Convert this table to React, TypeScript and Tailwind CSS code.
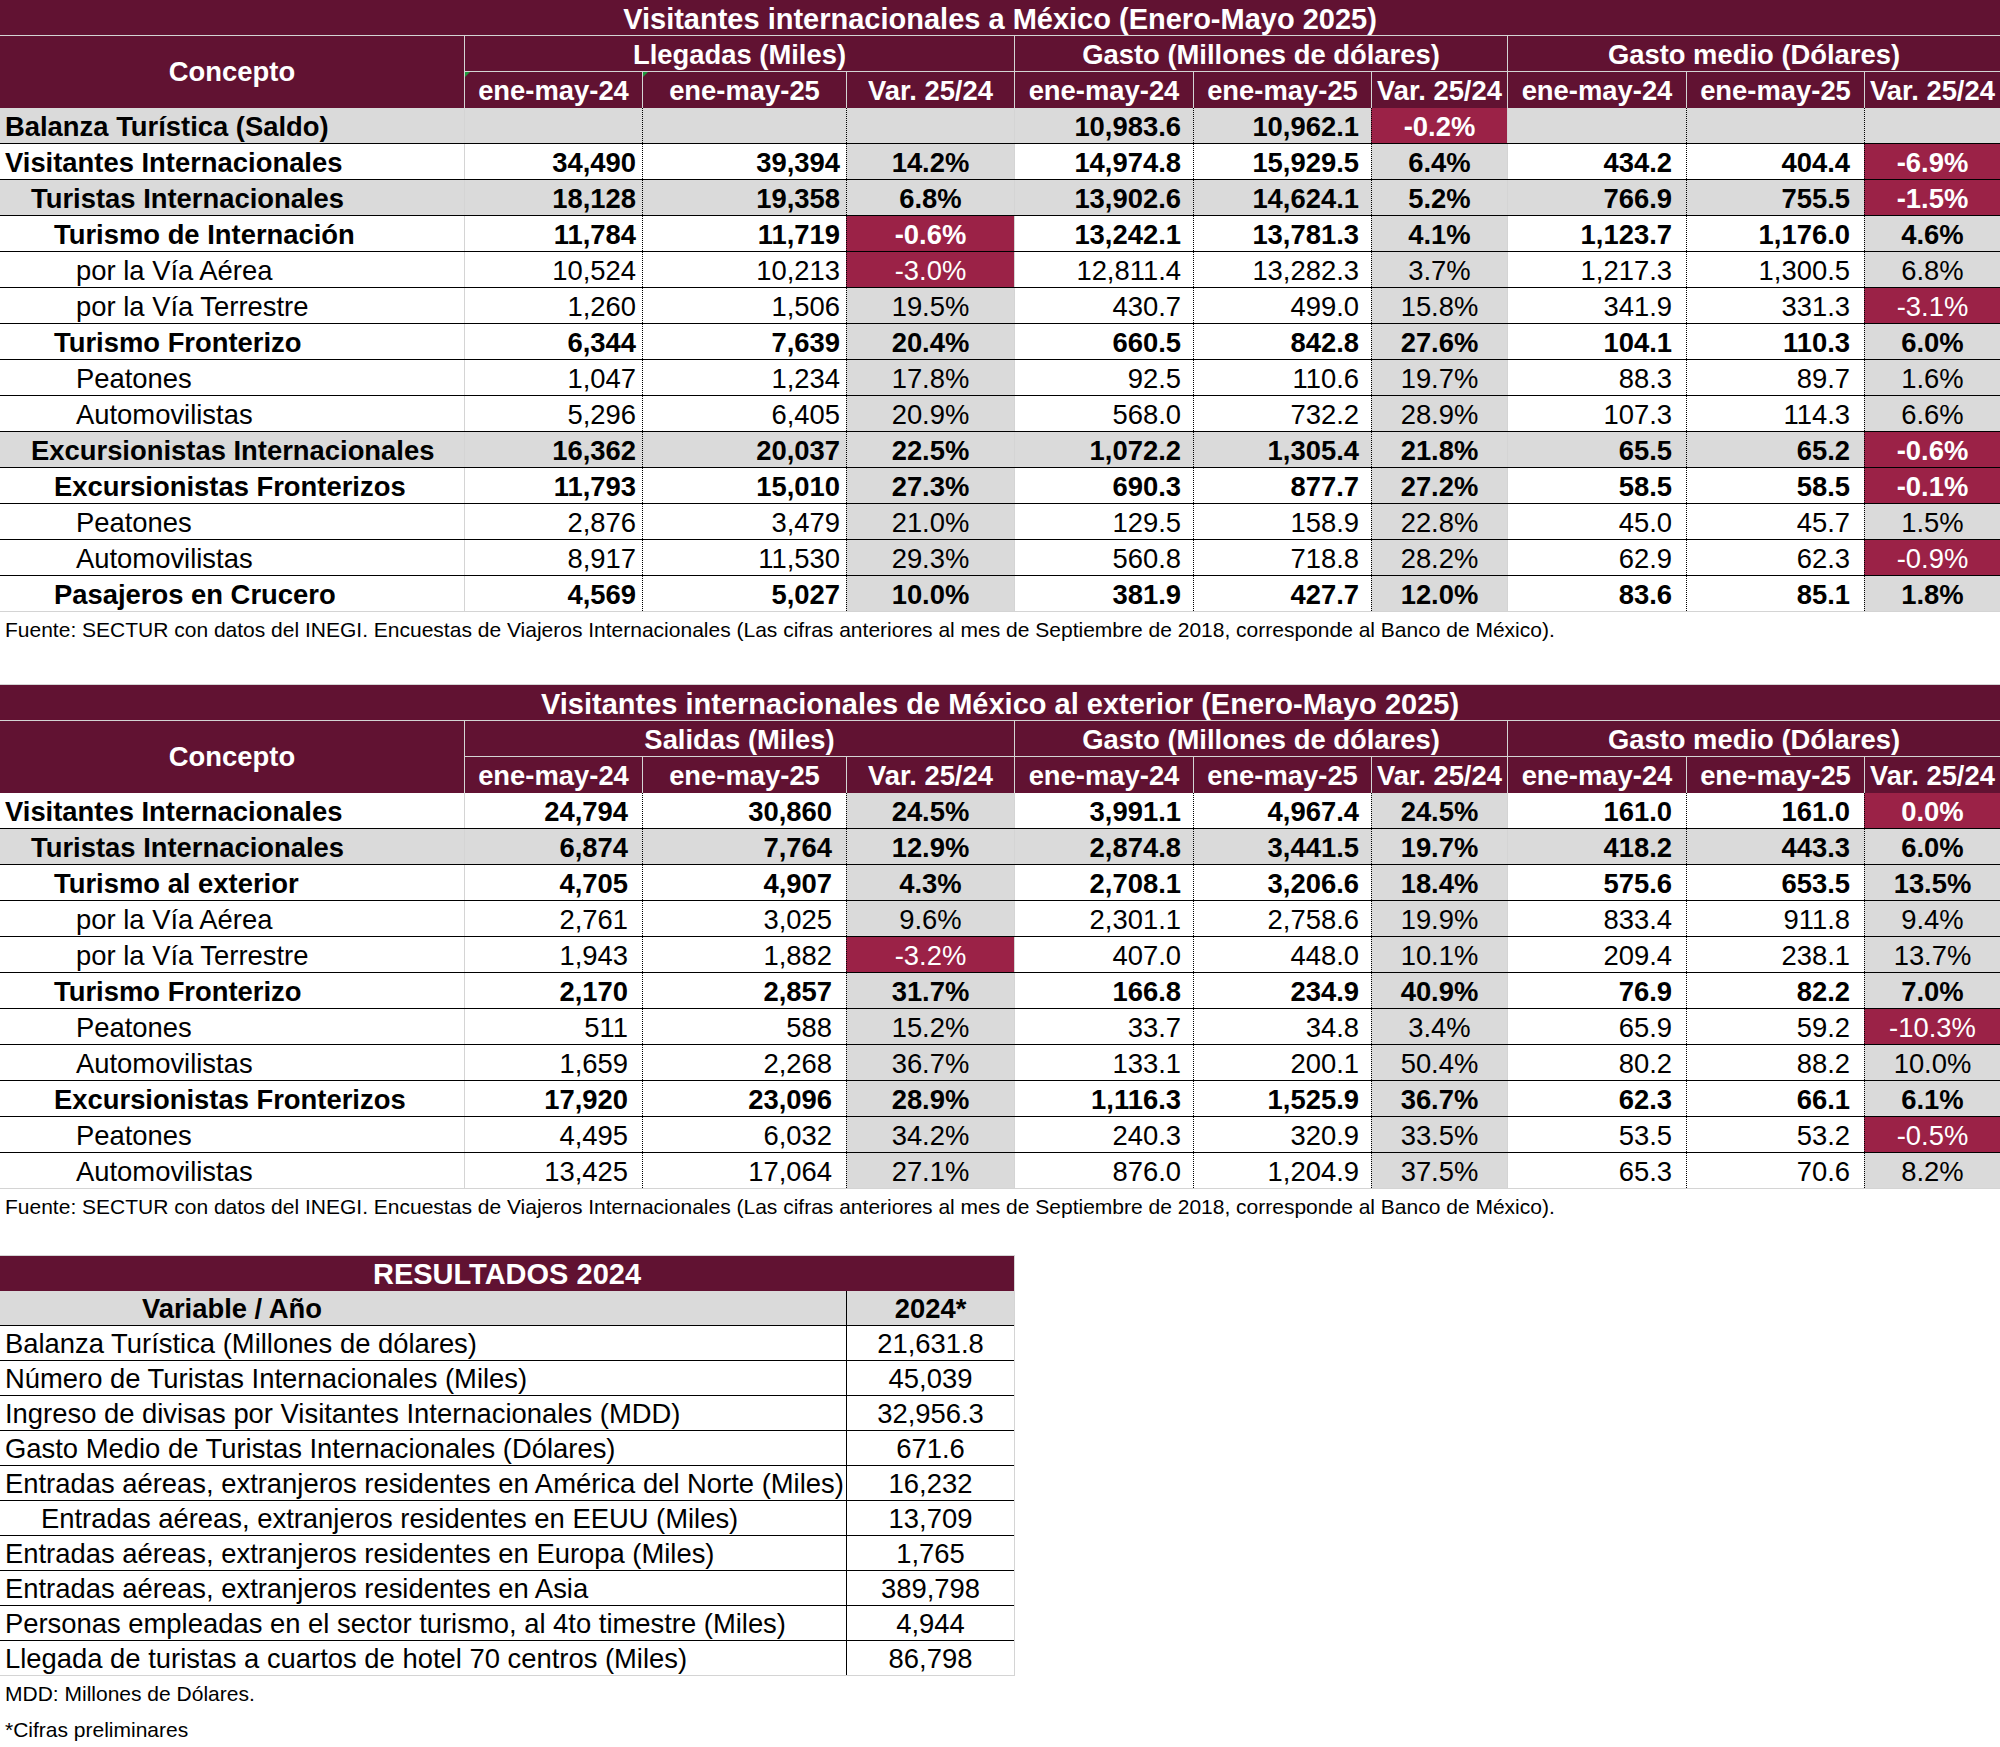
import React from "react";

type Row = {
	label: string;
	level: number;
	bold?: boolean;
	gray?: boolean;
	vals: string[];
	pink?: number[];
};

const indents = ["pl-[5px]", "pl-[31px]", "pl-[54px]", "pl-[76px]"];

const colW = [
	"w-[178px]",
	"w-[204px]",
	"w-[168px]",
	"w-[179px]",
	"w-[178px]",
	"w-[136px]",
	"w-[179px]",
	"w-[178px]",
	"w-[136px]",
];

const colLine = [
	"border-l border-[#d4d4d4]",
	"border-l border-dotted border-black",
	"border-l border-dotted border-black",
	"border-l border-[#d4d4d4]",
	"border-l border-dotted border-black",
	"border-l border-dotted border-black",
	"border-l border-[#d4d4d4]",
	"border-l border-dotted border-black",
	"border-l border-dotted border-black",
];

const pads1 = ["pr-[6px]", "pr-[6px]", "", "pr-[12px]", "pr-[12px]", "", "pr-[14px]", "pr-[14px]", ""];
const pads2 = ["pr-[14px]", "pr-[14px]", "", "pr-[12px]", "pr-[12px]", "", "pr-[14px]", "pr-[14px]", ""];

const arrivals: Row[] = [
	{ label: "Balanza Turística (Saldo)", level: 0, bold: true, gray: true, vals: ["", "", "", "10,983.6", "10,962.1", "-0.2%", "", "", ""], pink: [5] },
	{ label: "Visitantes Internacionales", level: 0, bold: true, vals: ["34,490", "39,394", "14.2%", "14,974.8", "15,929.5", "6.4%", "434.2", "404.4", "-6.9%"], pink: [8] },
	{ label: "Turistas Internacionales", level: 1, bold: true, gray: true, vals: ["18,128", "19,358", "6.8%", "13,902.6", "14,624.1", "5.2%", "766.9", "755.5", "-1.5%"], pink: [8] },
	{ label: "Turismo de Internación", level: 2, bold: true, vals: ["11,784", "11,719", "-0.6%", "13,242.1", "13,781.3", "4.1%", "1,123.7", "1,176.0", "4.6%"], pink: [2] },
	{ label: "por la Vía Aérea", level: 3, vals: ["10,524", "10,213", "-3.0%", "12,811.4", "13,282.3", "3.7%", "1,217.3", "1,300.5", "6.8%"], pink: [2] },
	{ label: "por la Vía Terrestre", level: 3, vals: ["1,260", "1,506", "19.5%", "430.7", "499.0", "15.8%", "341.9", "331.3", "-3.1%"], pink: [8] },
	{ label: "Turismo Fronterizo", level: 2, bold: true, vals: ["6,344", "7,639", "20.4%", "660.5", "842.8", "27.6%", "104.1", "110.3", "6.0%"] },
	{ label: "Peatones", level: 3, vals: ["1,047", "1,234", "17.8%", "92.5", "110.6", "19.7%", "88.3", "89.7", "1.6%"] },
	{ label: "Automovilistas", level: 3, vals: ["5,296", "6,405", "20.9%", "568.0", "732.2", "28.9%", "107.3", "114.3", "6.6%"] },
	{ label: "Excursionistas Internacionales", level: 1, bold: true, gray: true, vals: ["16,362", "20,037", "22.5%", "1,072.2", "1,305.4", "21.8%", "65.5", "65.2", "-0.6%"], pink: [8] },
	{ label: "Excursionistas Fronterizos", level: 2, bold: true, vals: ["11,793", "15,010", "27.3%", "690.3", "877.7", "27.2%", "58.5", "58.5", "-0.1%"], pink: [8] },
	{ label: "Peatones", level: 3, vals: ["2,876", "3,479", "21.0%", "129.5", "158.9", "22.8%", "45.0", "45.7", "1.5%"] },
	{ label: "Automovilistas", level: 3, vals: ["8,917", "11,530", "29.3%", "560.8", "718.8", "28.2%", "62.9", "62.3", "-0.9%"], pink: [8] },
	{ label: "Pasajeros en Crucero", level: 2, bold: true, vals: ["4,569", "5,027", "10.0%", "381.9", "427.7", "12.0%", "83.6", "85.1", "1.8%"] },
];

const departures: Row[] = [
	{ label: "Visitantes Internacionales", level: 0, bold: true, vals: ["24,794", "30,860", "24.5%", "3,991.1", "4,967.4", "24.5%", "161.0", "161.0", "0.0%"], pink: [8] },
	{ label: "Turistas Internacionales", level: 1, bold: true, gray: true, vals: ["6,874", "7,764", "12.9%", "2,874.8", "3,441.5", "19.7%", "418.2", "443.3", "6.0%"] },
	{ label: "Turismo al exterior", level: 2, bold: true, vals: ["4,705", "4,907", "4.3%", "2,708.1", "3,206.6", "18.4%", "575.6", "653.5", "13.5%"] },
	{ label: "por la Vía Aérea", level: 3, vals: ["2,761", "3,025", "9.6%", "2,301.1", "2,758.6", "19.9%", "833.4", "911.8", "9.4%"] },
	{ label: "por la Vía Terrestre", level: 3, vals: ["1,943", "1,882", "-3.2%", "407.0", "448.0", "10.1%", "209.4", "238.1", "13.7%"], pink: [2] },
	{ label: "Turismo Fronterizo", level: 2, bold: true, vals: ["2,170", "2,857", "31.7%", "166.8", "234.9", "40.9%", "76.9", "82.2", "7.0%"] },
	{ label: "Peatones", level: 3, vals: ["511", "588", "15.2%", "33.7", "34.8", "3.4%", "65.9", "59.2", "-10.3%"], pink: [8] },
	{ label: "Automovilistas", level: 3, vals: ["1,659", "2,268", "36.7%", "133.1", "200.1", "50.4%", "80.2", "88.2", "10.0%"] },
	{ label: "Excursionistas Fronterizos", level: 2, bold: true, vals: ["17,920", "23,096", "28.9%", "1,116.3", "1,525.9", "36.7%", "62.3", "66.1", "6.1%"] },
	{ label: "Peatones", level: 3, vals: ["4,495", "6,032", "34.2%", "240.3", "320.9", "33.5%", "53.5", "53.2", "-0.5%"], pink: [8] },
	{ label: "Automovilistas", level: 3, vals: ["13,425", "17,064", "27.1%", "876.0", "1,204.9", "37.5%", "65.3", "70.6", "8.2%"] },
];

const results: [string, string, boolean?][] = [
	["Balanza Turística (Millones de dólares)", "21,631.8"],
	["Número de Turistas Internacionales (Miles)", "45,039"],
	["Ingreso de divisas por Visitantes Internacionales (MDD)", "32,956.3"],
	["Gasto Medio de Turistas Internacionales (Dólares)", "671.6"],
	["Entradas aéreas, extranjeros residentes en América del Norte (Miles)", "16,232"],
	["Entradas aéreas, extranjeros residentes en EEUU (Miles)", "13,709", true],
	["Entradas aéreas, extranjeros residentes en Europa (Miles)", "1,765"],
	["Entradas aéreas, extranjeros residentes en Asia", "389,798"],
	["Personas empleadas en el sector turismo, al 4to timestre (Miles)", "4,944"],
	["Llegada de turistas a cuartos de hotel 70 centros (Miles)", "86,798"],
];

const fuente =
	"Fuente: SECTUR con datos del INEGI. Encuestas de Viajeros Internacionales (Las cifras anteriores al mes de Septiembre de 2018, corresponde al Banco de México).";

function Flag() {
	return (
		<span className="absolute left-0 top-0 h-0 w-0 border-t-[5px] border-r-[5px] border-t-[#1e9b3c] border-r-transparent" />
	);
}

function Header({ title, first, flags }: { title: string; first: string; flags?: boolean }) {
	const groups = [
		{ name: first, w: "w-[550px]", subs: ["w-[177px]", "w-[204px]", "w-[168px]"] },
		{ name: "Gasto (Millones de dólares)", w: "w-[493px]", subs: ["w-[178px]", "w-[178px]", "w-[136px]"] },
		{ name: "Gasto medio (Dólares)", w: "w-[493px]", subs: ["w-[178px]", "w-[178px]", "w-[136px]"] },
	];
	const labels = ["ene-may-24", "ene-may-25", "Var. 25/24"];
	return (
		<div className="bg-[#611232] font-bold text-white">
			<div className="h-[36px] border-b border-[#d4d4d4] pt-[3px] text-center text-[29px] leading-[32px]">
				{title}
			</div>
			<div className="flex">
				<div className="flex h-[72px] w-[464px] items-center justify-center">Concepto</div>
				{groups.map((g, gi) => (
					<div key={g.name} className={`${g.w} border-l border-[#d4d4d4]`}>
						<div className="h-[36px] border-b border-[#d4d4d4] pt-[3px] text-center leading-[32px]">
							{g.name}
						</div>
						<div className="flex h-[36px]">
							{g.subs.map((w, si) => (
								<div
									key={si}
									className={`relative ${w} ${si > 0 ? "border-l border-[#d4d4d4]" : ""} pt-[3px] text-center leading-[32px]`}
								>
									{flags && gi === 0 && si < 2 && <Flag />}
									{labels[si]}
								</div>
							))}
						</div>
					</div>
				))}
			</div>
		</div>
	);
}

function DataRow({ row, pads, last }: { row: Row; pads: string[]; last: boolean }) {
	return (
		<div
			className={`flex h-[36px] ${last ? "border-b border-[#d4d4d4]" : "border-b border-black"} ${
				row.gray ? "bg-[#dadada]" : "bg-white"
			} ${row.bold ? "font-bold" : ""}`}
		>
			<div className={`w-[464px] ${indents[row.level]} whitespace-nowrap pt-[3px] leading-[32px]`}>
				{row.label}
			</div>
			{row.vals.map((v, i) => {
				const isVar = i % 3 === 2;
				const pink = row.pink?.includes(i);
				return (
					<div
						key={i}
						className={`${colW[i]} ${colLine[i]} pt-[3px] leading-[32px] ${
							isVar ? "text-center" : `text-right ${pads[i]}`
						} ${pink ? "bg-[#9b2247] text-white" : isVar ? "bg-[#dadada]" : ""}`}
					>
						{v}
					</div>
				);
			})}
		</div>
	);
}

function Note({ text, h }: { text: string; h: string }) {
	return <div className={`${h} pl-[5px] text-[21px] leading-[36px]`}>{text}</div>;
}

export default function App() {
	return (
		<div className="w-[2000px] bg-white font-['Liberation_Sans',Arial,sans-serif] text-[27.4px] text-black">
			{/* Llegadas */}
			<Header title="Visitantes internacionales a México (Enero-Mayo 2025)" first="Llegadas (Miles)" flags />
			{arrivals.map((r, i) => (
				<DataRow key={i} row={r} pads={pads1} last={i === arrivals.length - 1} />
			))}
			<Note text={fuente} h="h-[72px]" />

			{/* Salidas */}
			<div className="border-t border-[#d4d4d4]">
				<Header title="Visitantes internacionales de México al exterior (Enero-Mayo 2025)" first="Salidas (Miles)" />
				{departures.map((r, i) => (
					<DataRow key={i} row={r} pads={pads2} last={i === departures.length - 1} />
				))}
			</div>
			<Note text={fuente} h="h-[66px]" />

			{/* Resultados */}
			<div className="w-[1015px] border-r border-t border-[#d4d4d4]">
				<div className="h-[35px] bg-[#611232] pt-[2px] text-center text-[29px] font-bold leading-[32px] text-white">
					RESULTADOS 2024
				</div>
				<div className="flex h-[35px] border-b border-black bg-[#dadada] font-bold">
					<div className="w-[846px] pt-[2px] leading-[32px]">
						<div className="w-[464px] text-center">Variable / Año</div>
					</div>
					<div className="w-[168px] border-l border-black pt-[2px] text-center leading-[32px]">2024*</div>
				</div>
				{results.map(([label, value, sub], i) => (
					<div
						key={i}
						className={`flex h-[35px] ${i === results.length - 1 ? "border-b border-[#d4d4d4]" : "border-b border-black"}`}
					>
						<div className={`w-[846px] whitespace-nowrap ${sub ? "pl-[41px]" : "pl-[5px]"} pt-[2px] leading-[32px]`}>
							{label}
						</div>
						<div className="w-[168px] border-l border-black pt-[2px] text-center leading-[32px]">{value}</div>
					</div>
				))}
			</div>
			<Note text="MDD: Millones de Dólares." h="h-[36px]" />
			<Note text="*Cifras preliminares" h="h-[36px]" />
		</div>
	);
}
